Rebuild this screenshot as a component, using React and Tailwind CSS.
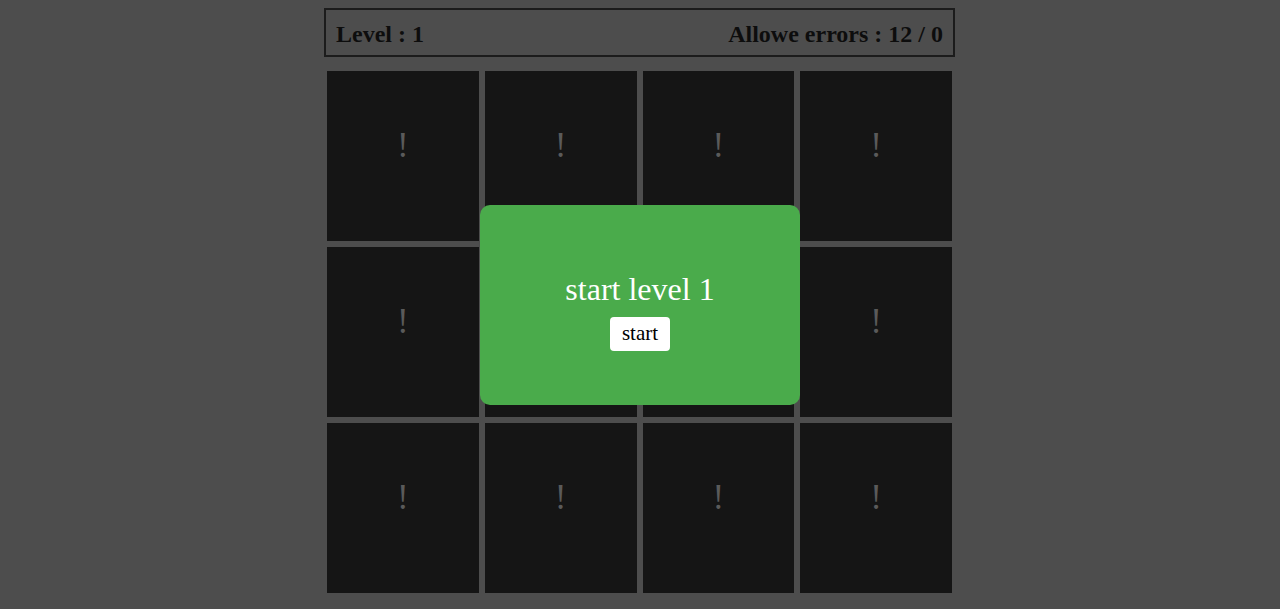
import React from "react";

const cells = Array.from({ length: 12 }, (_, i) => i);

export default function App() {
  return (
    <div className="min-h-[609px] bg-[#4d4d4d] pt-2 font-['Liberation_Serif',serif]">
      <div className="ml-[calc(50%-316px)] w-[631px]">
        {/* Status bar */}
        <div className="flex h-[49px] items-center justify-between border-2 border-[#1c1c1c] px-[10px] pt-[3px] text-[24px] font-bold text-[#0d0d0d]">
          <span>Level : 1</span>
          <span>Allowe errors : 12 / 0</span>
        </div>

        {/* Card grid */}
        <div className="mt-[11px] flex flex-wrap">
          {cells.map((i) => (
            <div
              key={i}
              className="m-[3px] flex h-[170px] w-[calc(25%-6px)] items-center justify-center bg-[#151515] pb-[20px] text-[35px] text-[#5a5a5a]"
            >
              !
            </div>
          ))}
        </div>
      </div>

      {/* Level dialog */}
      <div className="fixed left-1/2 top-1/2 flex h-[200px] w-[320px] -translate-x-1/2 -translate-y-1/2 flex-col items-center justify-center rounded-[10px] bg-[#4aab4b] pt-[14px]">
        <p className="text-[32px] leading-none text-white">start level 1</p>
        <button className="mt-[12px] h-[34px] rounded-[4px] bg-white px-[12px] text-[21px] text-black">
          start
        </button>
      </div>
    </div>
  );
}
